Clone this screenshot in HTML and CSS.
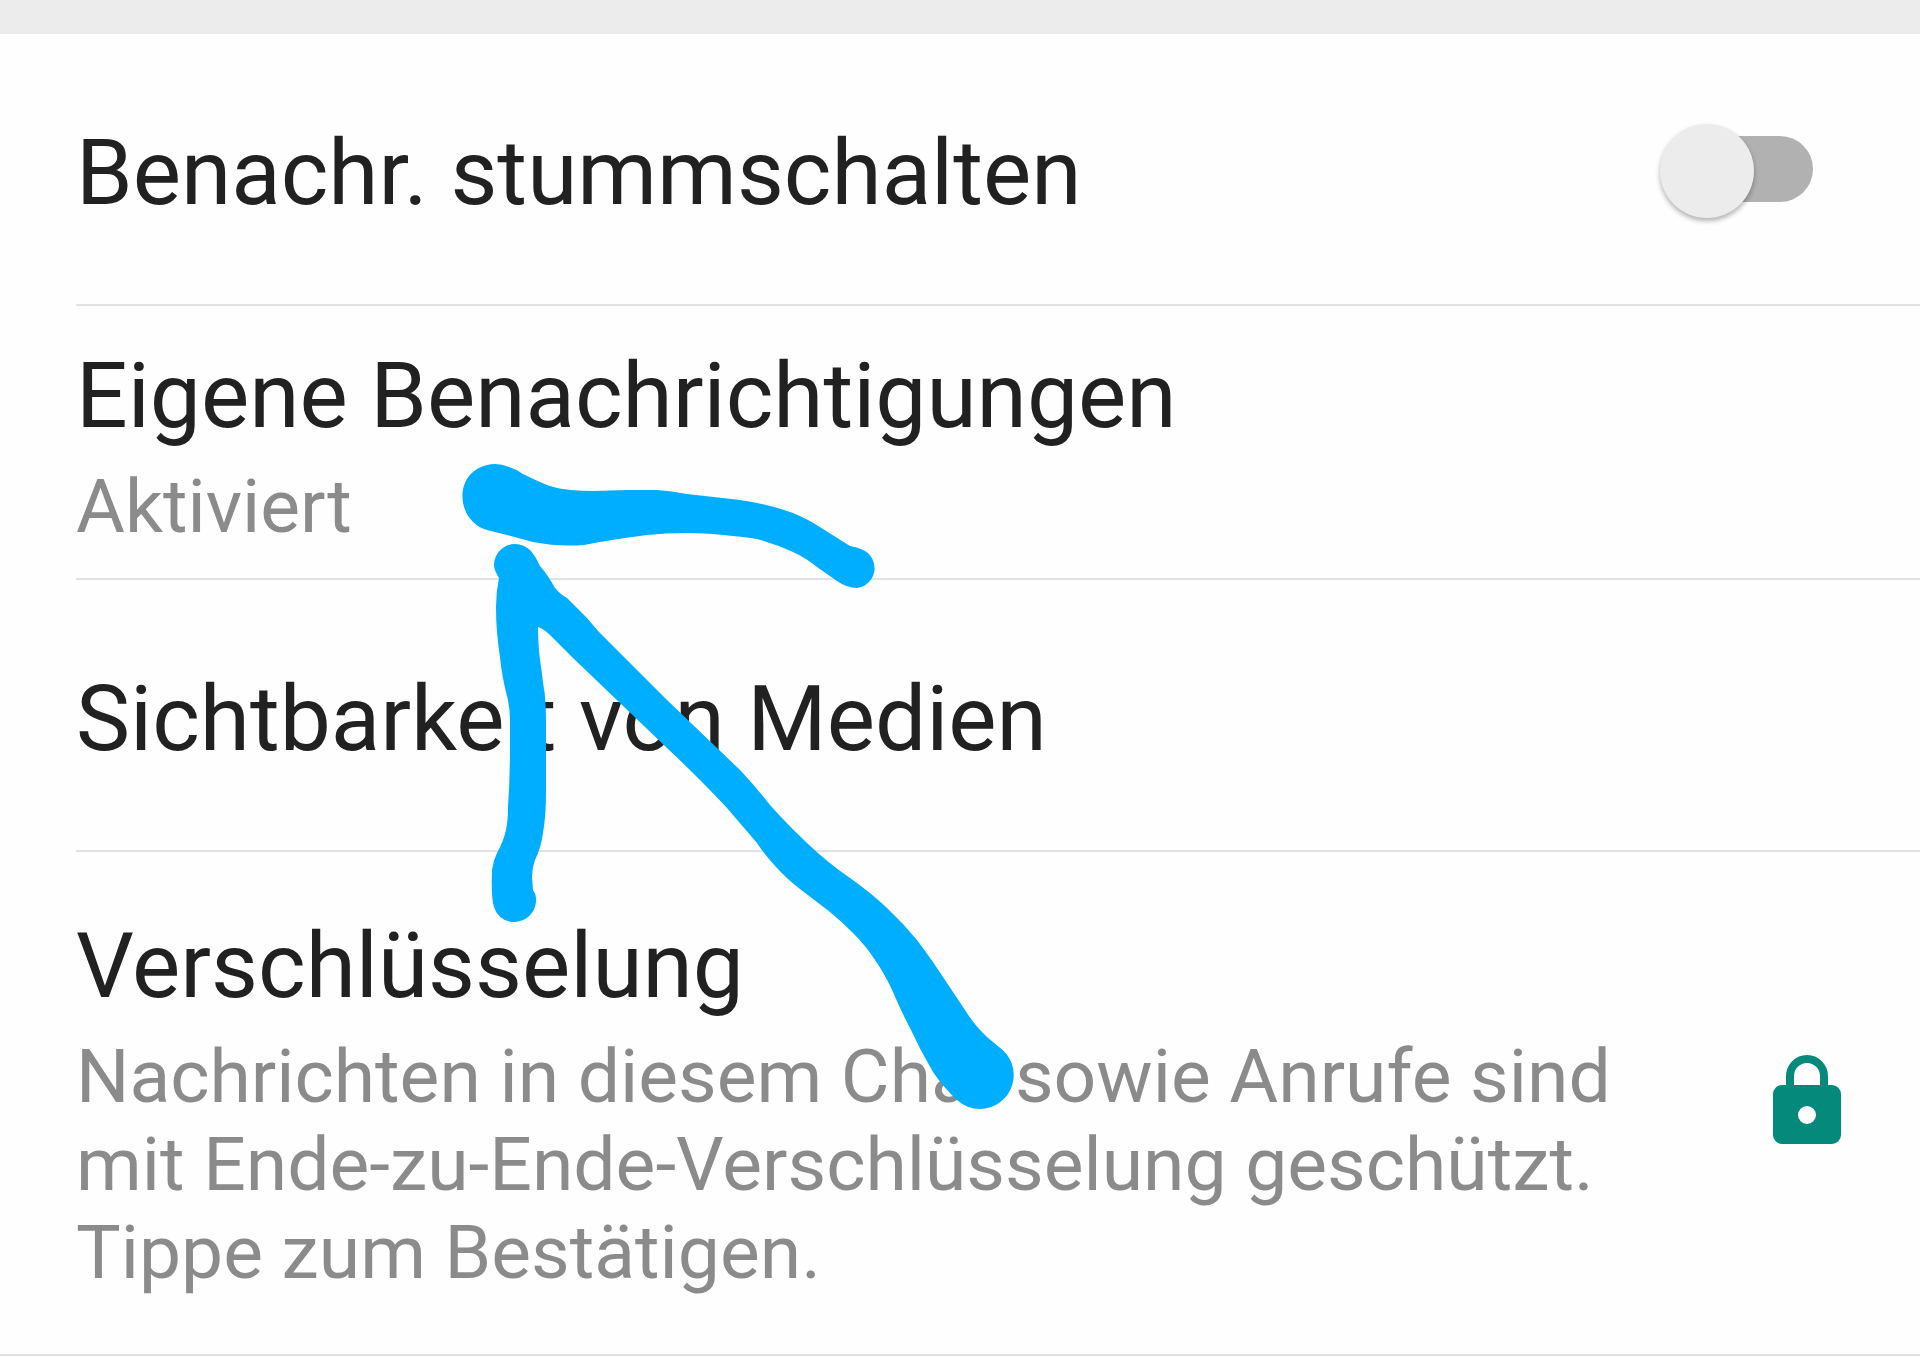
FILE: index.html
```html
<!DOCTYPE html>
<html lang="de">
	<head>
		<meta charset="utf-8">
		<title>Kontaktinfo</title>
		<link rel="stylesheet" href="styles.css">
	</head>
	<body>
		<main class="settings">
			<div class="row row-single">
				<label class="text title" for="mute">Benachr. stummschalten</label>
				<input class="switch" id="mute" type="checkbox" role="switch">
			</div>

			<button class="row row-double" type="button">
				<span class="text">
					<span class="title">Eigene Benachrichtigungen</span>
					<span class="detail">Aktiviert</span>
				</span>
			</button>

			<button class="row row-single" type="button">
				<span class="text title">Sichtbarkeit von Medien</span>
			</button>

			<button class="row row-long" type="button">
				<span class="text">
					<span class="title">Verschlüsselung</span>
					<span class="detail">Nachrichten in diesem Chat sowie Anrufe sind mit Ende-zu-Ende-Verschlüsselung geschützt. Tippe zum Bestätigen.</span>
				</span>
				<svg class="lock" viewBox="0 0 68 90" aria-hidden="true">
					<path d="M17 34V21a17 17 0 0 1 34 0v13" fill="none" stroke="#04897b" stroke-width="8"/>
					<path fill="#04897b" fill-rule="evenodd" d="M9 30h50a9 9 0 0 1 9 9v41a9 9 0 0 1-9 9H9a9 9 0 0 1-9-9V39a9 9 0 0 1 9-9zm25 21a9 9 0 1 0 0 18 9 9 0 0 0 0-18z"/>
				</svg>
			</button>

			<!-- arrow pointing at "Eigene Benachrichtigungen" -->
			<svg class="arrow" viewBox="460 462 556 650" aria-hidden="true">
				<path d="M495 464Q502 464 509 467Q516 469 523 474Q535 480 547 485Q558 489 571 490Q582 491 593 491L627 490H657Q672 491 687 494L740 500Q768 504 793 513Q808 519 823 529L850 546Q857 547 863 550A20 20 0 0 1 857 588Q847 588 837 581L817 567Q806 558 793 552Q776 544 757 539Q745 537 733 536Q710 533 687 533Q665 533 647 535Q623 538 600 542L584 545Q559 547 533 542L507 535L487 530C454 521 452 466 495 464Z"/>
				<path d="M515 544Q524 544 531 551Q536 557 540 566Q548 575 555 588Q561 595 567 598Q577 608 587 618Q598 632 610 643L667 700L740 770Q756 787 770 805Q786 823 807 843Q828 863 850 878Q870 892 887 908Q903 923 917 940Q933 961 947 983L967 1013Q976 1027 987 1037L999 1047A34 34 0 0 1 980 1109Q967 1109 957 1100Q944 1088 933 1072Q920 1050 910 1028Q900 1009 893 992Q885 974 873 957Q865 945 853 933Q842 922 830 912L800 889Q788 880 776 867Q764 854 757 843L727 808Q700 779 667 748L573 658L550 635Q544 629 538 627Q538 648 541 667L545 697Q546 708 546 720V793Q546 815 543 833Q541 848 535 860Q532 868 532 877L533 890Q536 894 536 898A22 22 0 0 1 515 922Q499 922 494 907Q491 898 492 870Q493 861 497 853Q504 840 506 830Q508 820 508 807Q510 777 510 747V720Q510 710 508 700Q502 678 500 657Q496 632 496 607Q496 592 499 578Q494 570 494 565A21 21 0 0 1 515 544Z"/>
			</svg>
		</main>
	</body>
</html>
```

FILE: styles.css
```css
* { box-sizing: border-box; }
body { margin: 0; background-color: #fefefe; font-family: Roboto, "Noto Sans", sans-serif; }

.settings { position: relative; border-top: 34px solid #ececec; }

/* ROWS */
.row { display: flex; align-items: center; width: calc(100% - 76px); margin: 0 0 0 76px; border: 0; border-bottom: 2px solid #e2e2e2; background: none; color: inherit; font: inherit; text-align: left; }
.row-single { padding: 77px 107px 77px 0; }
.row-double { padding: 28px 107px 28px 0; }
.row-long { padding: 52px 79px 58px 76px; margin-left: 0; width: 100%; gap: 120px; }
.text { display: flex; flex-direction: column; flex: 1; gap: 12px; padding-top: 8px; }
.title { color: #212121; font-size: 91px; line-height: 108px; }
.detail { color: #8b8b8b; font-size: 75px; line-height: 88px; }

/* SWITCH */
.switch { appearance: none; position: relative; width: 132px; height: 66px; margin: 0; border-radius: 33px; background-color: #b1b1b1; }
.switch::before { content: ""; position: absolute; top: -12px; left: -21px; width: 94px; height: 94px; border-radius: 50%; background-color: #ececec; box-shadow: 0 3px 5px rgba(0, 0, 0, 0.3); }
.switch:checked::before { left: 59px; }

.lock { flex: none; width: 68px; height: 90px; }

/* ARROW */
.arrow { position: absolute; top: 428px; left: 460px; width: 556px; height: 650px; fill: #00aeff; pointer-events: none; }
```
